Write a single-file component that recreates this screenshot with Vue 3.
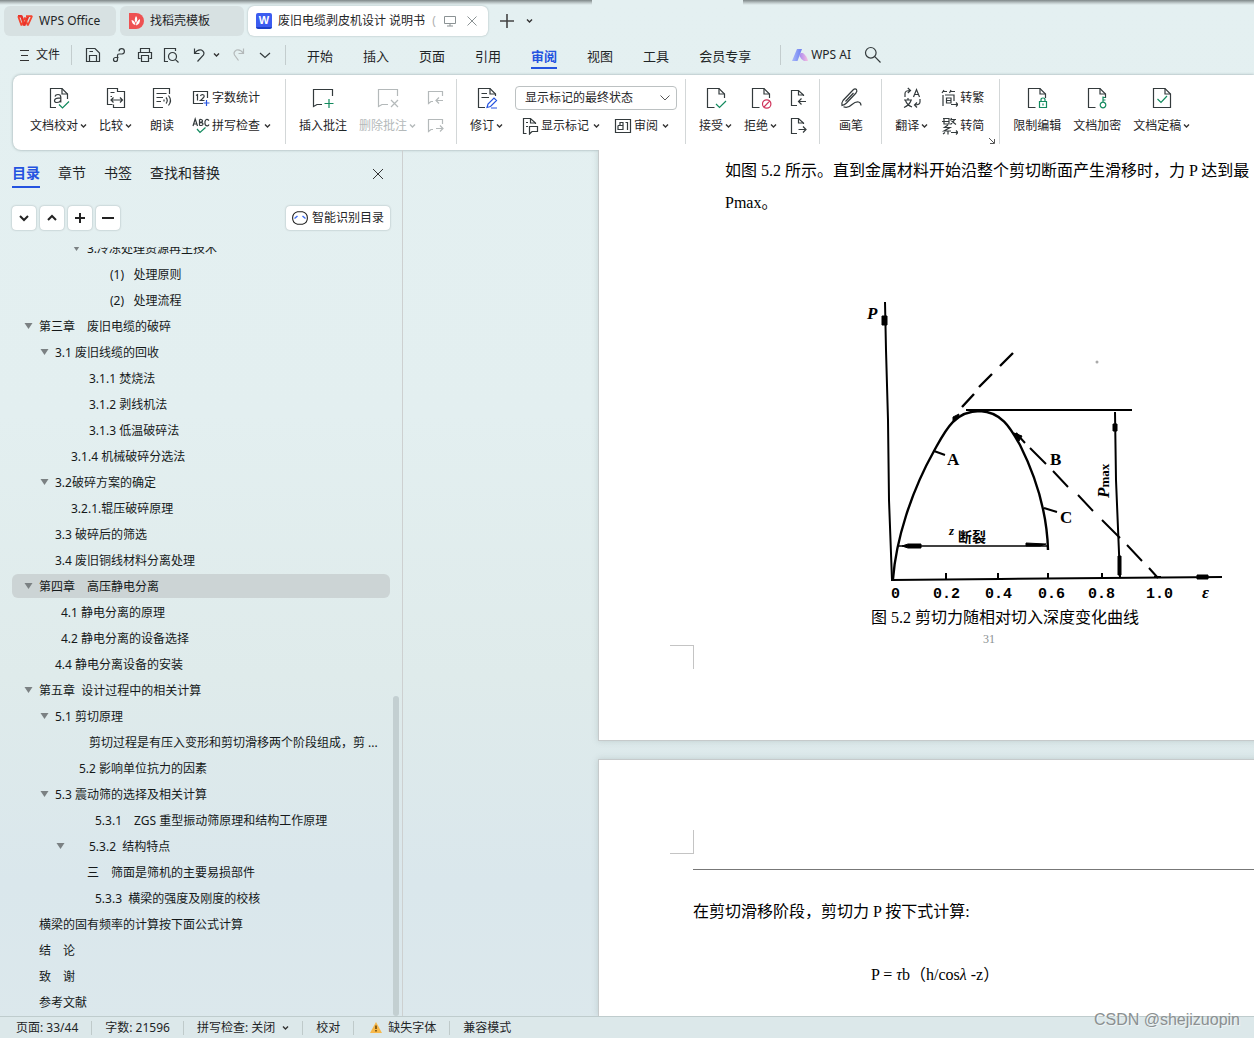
<script setup>
import { h, ref } from 'vue'

const K = '#333a3c'
const G = '#128a5e'
const B = '#2453e0'
const R = '#d0325a'
const M = '#b4b9ba'
const PAGE = 'M10.5 21.5H3.5V2.5H15L20.5 8V12'
const FOLD = 'M15 2.5V8H20.5'

/* each glyph is a list of [path, stroke] on a square grid */
const glyphs = {
  proof: [['M9 21.5H3.5V2.5H15L20.5 8V13', K], [FOLD, K], ['M8 10.5Q8.5 8.5 11 8.5Q13.8 8.5 13.8 11.3V16.5M13.8 11.8Q7.5 11.8 7.5 14.4Q7.5 16.5 10 16.5Q12.8 16.5 13.8 14.2', K], ['M12 18.5L15.5 22L22 15.5', G]],
  compare: [['M8.5 18.5H3.5V2.5H13.500V6M9.500 18.500V21.500H20.500V5.500H14', K], ['M6.5 6.5H10.500M6.5 10.5H8', K], ['M7 14H18.500M9.500 11.500L7 14L9.500 16.500M16 11.500L18.500 14L16 16.500', K]],
  read: [['M13 21.5H3.5V2.5H19.5V8', K], ['M6.5 7.5H16.5M6.5 11.5H13M6.5 15.5H11', K], ['M14 13.5V15.5M16 11.5Q18.5 14.5 16 17.5M18.5 9.5Q22.5 14.5 18.5 19.5', K]],
  addNote: [['M21.5 10V3.5H2.5V20.5L6 18.5H11', K], ['M18 13V22M13.5 17.5H22.5', G]],
  delNote: [['M21.5 10V3.5H2.5V20.5L6 18.5H12', M], ['M15 14L22 21M22 14L15 21', M]],
  revise: [['M10 21.5H3.5V2.5H15L20.5 8V10', K], [FOLD, K], ['M6.5 7.5H12M6.5 11.5H14', K], ['M12 21.5L13 18L19 12L21.5 14.5L15.5 20.5ZM16 22H22', B]],
  accept: [[PAGE, K], [FOLD, K], ['M12 18L15.5 21.5L22 15', G]],
  reject: [[PAGE, K], [FOLD, K], ['M13.5 18A4.2 4.2 0 1 0 21.9 18A4.2 4.2 0 1 0 13.5 18M15 21L20.6 15.2', R]],
  pen: [['M3 19.500Q2.500 16.500 4 14.500L14 4Q16 2 17.500 3.500Q18.500 5 17 7L7.500 17Q5.500 19 3 19.500ZM6.500 15.500L14.500 7', K], ['M4.500 20.800Q9 22.500 13 18.500Q16.500 15.500 19.500 16Q22 16.500 22 19.500', K]],
  translate: [['M5 11V7.5Q5 4.5 10.5 4.5M7.8 2L10.5 4.5L7.8 7', K], ['M13.500 11L16.5 3.500L19.500 11M14.5 8.5H18.5', K], ['M4 14H12M8 12V14M5.5 14.5Q7 19 12 21M11 14.5Q9.5 19 4 21.5', K], ['M20 13V16Q20 19 14.5 19M17 16.5L14.5 19L17 21.5', K]],
  lock: [[PAGE, K], [FOLD, K], ['M14.5 15.5H21.5V21.5H14.5ZM16 15.5V13.8Q16 12 18 12Q20 12 20 13.8V15.5M18 17.5V19.5', G]],
  key: [[PAGE, K], [FOLD, K], ['M15.2 19A2.8 2.8 0 1 0 20.8 19A2.8 2.8 0 1 0 15.2 19M18 16V10.5M18 11.5H20.5M18 14H20.5', G]],
  final: [['M3.5 21.5V2.5H15L20.5 8V21.5Z', K], [FOLD, K], ['M7.5 13L11 16.5L17 10', G]],
  count: [['M11 14.500H1.5V2.5H15.5V9', K], ['M4 6.500L5.5 5.500V11.5M8.5 7Q9 5.500 10.5 5.500Q12.3 5.700 12.2 7.200Q12 8.700 8.5 11.5H12.5', K], ['M14.500 11V17M11.500 14H17.500', B]],
  spell: [['M1 9L3.2 2L5.5 9M1.8 7H4.7M7.5 2.5V8.5M7.5 2.5Q10.5 2.2 10.5 4Q10.5 5.3 7.5 5.3Q11 5.3 11 7Q11 8.7 7.5 8.5M17 3.5Q14 1 13 4.5Q12.5 9 15.5 8.8Q16.5 8.7 17 7.5', K], ['M5 12L8 15.5L13.5 10.5', G]],
  prevNote: [['M16.5 7V2.5H2.5V14.5L5 12.5H7', M], ['M17 11.5H10M13 8.5L10 11.5L13 14.5', M]],
  nextNote: [['M16.5 7V2.5H2.5V14.5L5 12.5H7', M], ['M10 11.5H17M14 8.5L17 11.5L14 14.5', M]],
  prevDoc: [['M8 16.5H2.5V1.5H9.5L14.5 6V7M9.5 1.5V6H14.5', K], ['M17 12.5H9.5M12.5 9.5L9.5 12.5L12.5 15.5', K]],
  nextDoc: [['M8 16.5H2.5V1.5H9.5L14.5 6V7M9.5 1.5V6H14.5', K], ['M9.5 12.5H17M14 9.5L17 12.5L14 15.5', K]],
  marks: [['M5.5 16.5H2.5V1.5H9.5L14.5 6V7M9.5 1.5V6H14.5M5 5.5H7M5 9.5H7', K], ['M8.5 9.5H16.5V14.5H11L8.5 17Z', K]],
  pane: [['M1.5 2.5H16.5V15.5H1.5Z', K], ['M4 8.500V12.500H9V5.500H6V8.500H9M4 8.500H6M11.500 5.500H13.500V13', K]],
  toTrad: [['M4 1L2 4M3 2.5H7M11 1L9.5 4M10 2.5H15M3 6V17M5 6H14V12M6.5 9H11V14H6.5ZM6.5 11.5H11', K], ['M11 15.5H18M16 13.5L18 15.5L16 17.5', K]],
  toSimp: [['M3 1.5H9M2 4.5H9.5M4 2V7H9V1M11.5 1L10.5 3.5M11 2.5H16M14.5 3L10.5 7.5M11.5 4L16 7.5M8 8L4.5 10.5H10L4 14H11M8 14V17.5M5 15.5L3 17', K], ['M11 15.5H18M16 13.5L18 15.5L16 17.5', K]],
  save: [['M2.5 15.5V2.5H11L15.5 7V15.5ZM5.5 15.5V9.5H12.5V15.5M5.5 5.5H9', K]],
  link: [['M8.500 11.500H5.500A2 2 0 1 0 7.500 13.500V9.500Q7.500 8 9 8H12A2.700 2.700 0 1 0 9 5.200', K]],
  print: [['M4.5 6V2.5H13.5V6M4.5 12.5H2.5V6.5H15.5V12.5H13.5M5.5 9.5H12.5V15.5H5.5Z', K]],
  preview: [['M6 15.5H2.5V2.5H13.5V5', K], ['M6.5 10.5A4 4 0 1 0 14.5 10.5A4 4 0 1 0 6.5 10.5M13.3 13.3L16.5 16.5', K]],
  undo: [['M4.500 2.500V7.500H9.500M4.500 7.500Q7.500 3 11.500 4Q15 6 13.500 9L7.500 15.500', K]],
  redo: [['M13.500 2.500V7.500H8.500M13.500 7.500Q10.500 3 6.500 4Q3 6 4.500 9L8.500 14.500', M]],
  chev: [['M4 7L9 11.5L14 7', K]],
  search: [['M1.5 6.8A5.3 5.3 0 1 0 12.1 6.8A5.3 5.3 0 1 0 1.5 6.8M10.8 10.6L16.5 16.5', K]],
}
const sizes = { small: 18, big: 24 }
const Glyph = (p) => h('svg', {
  width: sizes[p.size], height: sizes[p.size], viewBox: `0 0 ${sizes[p.size]} ${sizes[p.size]}`,
  fill: 'none', 'stroke-width': 1.2, 'aria-hidden': 'true',
}, glyphs[p.name].map(([d, stroke]) => h('path', { d, stroke })))
Glyph.props = ['name', 'size']

const Caret = (p) => h('svg', { width: 7, height: 6, viewBox: '0 0 7 6', fill: 'none' },
  [h('path', { d: 'M1 1.5L3.5 4L6 1.5', stroke: p.color || '#333', 'stroke-width': 1.4 })])
Caret.props = ['color']

const menus = ['开始', '插入', '页面', '引用', '审阅', '视图', '工具', '会员专享']
const side = ['目录', '章节', '书签', '查找和替换']
const view = ref('显示标记的最终状态')

/* x: text start, a: x of the folding arrow */
const toc = [
  { t: '3.冷冻处理资源再生技术', x: 87, a: 72 },
  { t: '(1)   处理原则', x: 110 },
  { t: '(2)   处理流程', x: 110 },
  { t: '第三章　废旧电缆的破碎', x: 39, a: 24 },
  { t: '3.1 废旧线缆的回收', x: 55, a: 40 },
  { t: '3.1.1 焚烧法', x: 89 },
  { t: '3.1.2 剥线机法', x: 89 },
  { t: '3.1.3 低温破碎法', x: 89 },
  { t: '3.1.4 机械破碎分选法', x: 71 },
  { t: '3.2破碎方案的确定', x: 55, a: 40 },
  { t: '3.2.1.辊压破碎原理', x: 71 },
  { t: '3.3 破碎后的筛选', x: 55 },
  { t: '3.4 废旧铜线材料分离处理', x: 55 },
  { t: '第四章　高压静电分离', x: 39, a: 24, on: true },
  { t: '4.1 静电分离的原理', x: 61 },
  { t: '4.2 静电分离的设备选择', x: 61 },
  { t: '4.4 静电分离设备的安装', x: 55 },
  { t: '第五章  设计过程中的相关计算', x: 39, a: 24 },
  { t: '5.1 剪切原理', x: 55, a: 40 },
  { t: '剪切过程是有压入变形和剪切滑移两个阶段组成，剪 ...', x: 89 },
  { t: '5.2 影响单位抗力的因素', x: 79 },
  { t: '5.3 震动筛的选择及相关计算', x: 55, a: 40 },
  { t: '5.3.1　ZGS 重型振动筛原理和结构工作原理', x: 95 },
  { t: '5.3.2  结构特点', x: 89, a: 56 },
  { t: '三　筛面是筛机的主要易损部件', x: 87 },
  { t: '5.3.3  横梁的强度及刚度的校核', x: 95 },
  { t: '横梁的固有频率的计算按下面公式计算', x: 39 },
  { t: '结　论', x: 39 },
  { t: '致　谢', x: 39 },
  { t: '参考文献', x: 39 },
]
</script>

<template>
  <div class="app">
    <header class="tabs">
      <button class="tab home">
        <svg width="16" height="12" viewBox="0 0 16 12" fill="none" stroke-width="2.4" stroke-linejoin="bevel">
          <path d="M1 1.2H4.5L7.2 10.5L11 1.5" stroke="#e8322c" /><path d="M1.2 1.2L4.5 10.5L7.8 2.5L10.8 10.5L15 1.2H9" stroke="#f4442f" stroke-width="1.8" />
        </svg>
        <span>WPS Office</span>
      </button>
      <button class="tab store">
        <svg width="16" height="16" viewBox="0 0 16 16">
          <path d="M1 0H8A8 8 0 0 1 8 16H1Z" fill="#ee5152" />
          <path d="M8 3Q10.5 6 8 10Q5.500 7 8 3M3.500 7Q7 7.500 7.500 12Q4 11.500 3.500 7M12 6Q12.500 11 8 12.500Q8 8.500 12 6" fill="#fff" />
        </svg>
        <span>找稻壳模板</span>
      </button>
      <button class="tab doc">
        <span class="wicon">W</span>
        <span>废旧电缆剥皮机设计 说明书</span>
        <span class="fade">(</span>
        <svg class="mon" width="14" height="12" viewBox="0 0 14 12" fill="none" stroke="#8b9294"><path d="M1.500 1.500H12.500V8.500H1.500ZM7 8.500V11M4 11H10" /></svg>
        <svg width="10" height="10" viewBox="0 0 10 10" fill="none" stroke="#8b9294"><path d="M.5.5L9.500 9.500M9.500.5L.5 9.500" /></svg>
      </button>
      <button class="plain plus" aria-label="新建">
        <svg width="14" height="14" viewBox="0 0 14 14" fill="none" stroke="#444" stroke-width="1.6"><path d="M7 0V14M0 7H14" /></svg>
      </button>
      <button class="plain" aria-label="更多"><Caret /></button>
    </header>

    <nav class="menu">
      <button class="plain file">
        <svg width="9" height="12" viewBox="0 0 9 12" fill="none" stroke="#333"><path d="M0 1.500H9M1 6.500H8M0 11.500H9" /></svg>文件
      </button>
      <i class="bar"></i>
      <div class="quick">
        <button class="plain" aria-label="保存"><Glyph name="save" size="small" /></button>
        <button class="plain" aria-label="链接"><Glyph name="link" size="small" /></button>
        <button class="plain" aria-label="打印"><Glyph name="print" size="small" /></button>
        <button class="plain" aria-label="预览"><Glyph name="preview" size="small" /></button>
        <button class="plain und" aria-label="撤销"><Glyph name="undo" size="small" /><Caret /></button>
        <button class="plain" aria-label="恢复"><Glyph name="redo" size="small" /></button>
        <button class="plain" aria-label="展开"><Glyph name="chev" size="small" /></button>
      </div>
      <i class="bar"></i>
      <div class="items">
        <button v-for="m in menus" :key="m" class="plain item" :class="{ on: m === '审阅' }">{{ m }}</button>
      </div>
      <i class="bar"></i>
      <button class="plain ai">
        <svg width="16" height="12" viewBox="0 0 16 12">
          <defs>
            <linearGradient id="ga"><stop offset="0" stop-color="#a9b9fa" /><stop offset="1" stop-color="#6a7df0" /></linearGradient>
            <linearGradient id="gb"><stop offset="0" stop-color="#a98bf0" /><stop offset="1" stop-color="#f7bfe0" /></linearGradient>
          </defs>
          <path d="M5 0H10L5.500 12H0Z" fill="url(#ga)" /><path d="M8.500 4L11 4Q15 7 16 12H12Q9 10.500 7.500 7Z" fill="url(#gb)" />
        </svg>
        WPS AI
      </button>
      <button class="plain" aria-label="搜索"><Glyph name="search" size="small" /></button>
    </nav>

    <section class="ribbon">
      <div class="group first">
        <button class="big"><Glyph name="proof" size="big" /><span>文档校对<Caret /></span></button>
        <button class="big"><Glyph name="compare" size="big" /><span>比较<Caret /></span></button>
        <button class="big solo"><Glyph name="read" size="big" /><span>朗读</span></button>
        <div class="stack">
          <button class="small"><Glyph name="count" size="small" />字数统计</button>
          <button class="small"><Glyph name="spell" size="small" />拼写检查<Caret class="gapc" /></button>
        </div>
      </div>
      <div class="group">
        <button class="big"><Glyph name="addNote" size="big" /><span>插入批注</span></button>
        <button class="big off"><Glyph name="delNote" size="big" /><span>删除批注<Caret color="#b4b9ba" /></span></button>
        <div class="stack notes">
          <button class="small" aria-label="上一条批注"><Glyph name="prevNote" size="small" /></button>
          <button class="small" aria-label="下一条批注"><Glyph name="nextNote" size="small" /></button>
        </div>
      </div>
      <div class="group track">
        <button class="big"><Glyph name="revise" size="big" /><span>修订<Caret /></span></button>
        <div class="stack">
          <label class="pick">
            <select v-model="view" aria-label="标记显示方式"><option>显示标记的最终状态</option></select>
            <svg width="10" height="6" viewBox="0 0 10 6" fill="none" stroke="#555"><path d="M.5.500L5 5L9.500.500" /></svg>
          </label>
          <div class="pair">
            <button class="small"><Glyph name="marks" size="small" />显示标记<Caret class="gapc" /></button>
            <button class="small"><Glyph name="pane" size="small" />审阅<Caret class="gapc" /></button>
          </div>
        </div>
      </div>
      <div class="group">
        <button class="big"><Glyph name="accept" size="big" /><span>接受<Caret /></span></button>
        <button class="big"><Glyph name="reject" size="big" /><span>拒绝<Caret /></span></button>
        <div class="stack">
          <button class="small" aria-label="上一条修订"><Glyph name="prevDoc" size="small" /></button>
          <button class="small" aria-label="下一条修订"><Glyph name="nextDoc" size="small" /></button>
        </div>
      </div>
      <div class="group">
        <button class="big solo"><Glyph name="pen" size="big" /><span>画笔</span></button>
      </div>
      <div class="group">
        <button class="big"><Glyph name="translate" size="big" /><span>翻译<Caret /></span></button>
        <div class="stack">
          <button class="small"><Glyph name="toTrad" size="small" />转繁</button>
          <button class="small"><Glyph name="toSimp" size="small" />转简</button>
        </div>
        <svg class="launch" width="6" height="6" viewBox="0 0 6 6" fill="none" stroke="#555"><path d="M0 0L5 5M5.500 1V5.500H1" /></svg>
      </div>
      <div class="group last">
        <button class="big"><Glyph name="lock" size="big" /><span>限制编辑</span></button>
        <button class="big"><Glyph name="key" size="big" /><span>文档加密</span></button>
        <button class="big"><Glyph name="final" size="big" /><span>文档定稿<Caret /></span></button>
      </div>
    </section>

    <main class="main">
      <aside class="side">
        <div class="stabs">
          <button v-for="s in side" :key="s" class="plain stab" :class="{ on: s === '目录' }">{{ s }}</button>
          <button class="plain close" aria-label="关闭">
            <svg width="10" height="10" viewBox="0 0 10 10" fill="none" stroke="#333"><path d="M0 0L10 10M10 0L0 10" /></svg>
          </button>
        </div>
        <div class="tools">
          <button class="sq" aria-label="展开"><svg width="12" height="12" viewBox="0 0 12 12"><path d="M2 4L6 8L10 4" /></svg></button>
          <button class="sq" aria-label="收起"><svg width="12" height="12" viewBox="0 0 12 12"><path d="M2 8L6 4L10 8" /></svg></button>
          <button class="sq" aria-label="增加"><svg width="12" height="12" viewBox="0 0 12 12"><path d="M6 1V11M1 6H11" /></svg></button>
          <button class="sq" aria-label="减少"><svg width="12" height="12" viewBox="0 0 12 12"><path d="M0 6H12" /></svg></button>
          <button class="sq smart">
            <svg width="16" height="14" viewBox="0 0 16 14"><path d="M5.500 .7H10.500Q15.400 2 15.400 7Q15.400 12 10.500 13.300H5.500Q.6 12 .6 7Q.6 2 5.500 .7Z" stroke-width="1.100" /><path d="M2.500 7.500L5.500 5M13.500 7.500L10.500 5" stroke="#3b6af0" stroke-width="1.400" /></svg>
            智能识别目录
          </button>
        </div>
        <div class="tree">
          <ul>
            <li v-for="r in toc" :key="r.t" :class="{ on: r.on }" :style="{ paddingLeft: (r.a || r.x) - 12 + 'px' }">
              <svg v-if="r.a" width="9" height="6" viewBox="0 0 9 6" :style="{ marginRight: r.x - r.a - 9 + 'px' }"><path d="M0.500 0H8.500L4.500 6Z" fill="#7b8183" /></svg>
              <span>{{ r.t }}</span>
            </li>
          </ul>
          <div class="scroll"></div>
        </div>
      </aside>

      <article class="desk">
        <section class="page one">
          <p class="body in">如图 5.2 所示。直到金属材料开始沿整个剪切断面产生滑移时，力 P 达到最<br>Pmax。</p>
          <svg class="chart" width="370" height="312" viewBox="860 296 370 312" fill="none" stroke="#000" stroke-width="2">
            <path d="M885 302L886 350L888 420L889 500L892 580L1000 579L1222 577" />
            <path d="M882 316H887V325H882Z M1197 575H1208V579H1197Z" fill="#000" stroke-width="1" />
            <path d="M893 579C896 540 911 492 934 451C945 431 954 411 980 411C1001 412 1010 427 1020 445C1035 475 1047 512 1048 550" stroke-width="2.400" />
            <path d="M962 407L974 394M979 387L992 374M1000 366L1013 353" stroke-width="2.400" />
            <path d="M953 417L959 414L957 419L953 421Z M1014 433L1022 436L1019 441Z" fill="#000" stroke-width="1" />
            <path d="M966 410H1132" />
            <path d="M1016 433L1025 443M1030 448L1046 464M1053 471L1068 487M1078 495L1093 511M1102 520L1120 538M1127 545L1142 561M1149 568L1158 578" />
            <path d="M1115 412L1116 480L1120 577" />
            <path d="M1113 424H1117V431H1113ZM1118 556H1121V575H1118Z" fill="#000" stroke-width="1" />
            <path d="M898 546H1048" stroke-width="1.600" />
            <path d="M902 546L908 544H921V548H908ZM1046 544L1040 546H1026V543Z" fill="#000" stroke-width="1" />
            <path d="M934 451L945 455M1044 508L1057 512M946 573V579M998 573V579M1048 573V579M1102 573V579M1154 577H1161" />
            <circle cx="1097" cy="362" r="1.500" fill="#aaa" stroke="none" />
            <g class="lab">
              <text x="867" y="319" class="ital">P</text>
              <text x="947" y="465">A</text><text x="1050" y="465">B</text><text x="1060" y="523">C</text>
              <text x="949" y="535" class="ital tiny">z</text><text x="958" y="542" class="cn">断裂</text>
              <text transform="translate(1109 498) rotate(-90)"><tspan class="ital">P</tspan><tspan class="tiny">max</tspan></text>
              <g class="num">
                <text x="891" y="598">0</text><text x="933" y="598">0.2</text><text x="985" y="598">0.4</text><text x="1038" y="598">0.6</text><text x="1088" y="598">0.8</text><text x="1146" y="598">1.0</text>
              </g>
              <text x="1202" y="598" class="ital">ε</text>
            </g>
          </svg>
          <p class="cap">图 5.2 剪切力随相对切入深度变化曲线</p>
          <p class="no">31</p>
          <i class="crop top"></i>
        </section>
        <section class="page two">
          <i class="crop bottom"></i>
          <hr>
          <p class="body">在剪切滑移阶段，剪切力 P 按下式计算:</p>
          <p class="body formula">P = <em>τ</em>b（h/cos<em>λ</em> -z）</p>
        </section>
      </article>
    </main>

    <footer class="status">
      <span>页面: 33/44</span>
      <span>字数: 21596</span>
      <span>拼写检查: 关闭<Caret class="gaps" /></span>
      <span>校对</span>
      <span class="warn"><svg width="12" height="11" viewBox="0 0 12 11"><path d="M6 0L12 11H0Z" fill="#f7b84a" /><path d="M6 3.500V7M6 8V9.500" stroke="#5a3a00" stroke-width="1.400" /></svg>缺失字体</span>
      <span>兼容模式</span>
      <b class="mark">CSDN @shejizuopin</b>
    </footer>
  </div>
</template>

<style>
body { margin: 0; }
</style>

<style scoped>
.app {
  height: 100vh;
  display: flex;
  flex-direction: column;
  overflow: hidden;
  color: #1f2527;
  font: 12px/18px "Noto Sans", "Noto Sans CJK SC", sans-serif;
  background: linear-gradient(180deg, #e4f0f1 0%, #e3eff0 40%, #dfebeb 65%, #dae7ec 85%, #dce8ec 100%);
}
button {
  font: inherit;
  color: inherit;
  border: 0;
  padding: 0;
  background: none;
  white-space: nowrap;
  display: flex;
  align-items: center;
}
svg { flex: none; display: block; }
p, ul { margin: 0; padding: 0; }

.tabs {
  display: flex;
  align-items: center;
  height: 30px;
  padding: 6px 4px 5px;
  gap: 4px;
  background:
    linear-gradient(#7e8788, #c2cccd 3px, transparent 5px) 0 0 / 592px 5px no-repeat,
    linear-gradient(#7e8788, #c2cccd 3px, transparent 5px) 743px 0 / 100% 5px no-repeat;
}
.tab { height: 30px; border-radius: 6px; background: #d7e1e2; box-sizing: border-box; }
.home { width: 112px; padding-left: 13px; gap: 6px; }
.store { width: 124px; padding-left: 8px; gap: 6px; }
.doc { width: 240px; padding-left: 8px; gap: 6px; background: #fff; box-shadow: 0 0 2px #9fb0b2; }
.wicon { width: 16px; height: 16px; background: #3c5cf0; border-radius: 2px; border-bottom: 2px solid #1c3fc8; box-sizing: border-box; color: #fff; font: bold 11px/14px "Liberation Sans", sans-serif; text-align: center; }
.fade { width: 6px; color: #b0b0b0; }
.mon { margin-right: 4px; }
.plus { margin: 0 8px; }

.menu { display: flex; align-items: center; height: 28px; padding: 0 20px 6px; }
.file { gap: 7px; }
.bar { width: 1px; height: 20px; background: #c3cdce; margin: 0 11px; }
.quick { display: flex; gap: 8px; margin-left: 1px; }
.und { gap: 5px; margin: 0 2px; }
.items { display: flex; gap: 30px; margin: 0 18px 0 10px; font-size: 13px; }
.item { height: 28px; padding-top: 3px; border-bottom: 2px solid transparent; box-sizing: border-box; }
.item.on { color: #2453e0; font-weight: bold; border-color: #2453e0; }
.ai { gap: 3px; margin-right: 13px; }

.ribbon {
  display: flex;
  height: 75px;
  margin-left: 13px;
  background: #fff;
  border-radius: 8px 0 0 8px;
  box-shadow: 0 0 3px #93a5a6;
}
.group {
  display: flex;
  align-items: flex-start;
  gap: 12px;
  margin: 4px 0 6px;
  padding: 7px 12px 0 13px;
  border-right: 1px solid #d3d7d8;
}
.first { padding-left: 17px; padding-right: 14px; }
.track { padding-right: 8px; }
.last { border: 0; }
.big { flex-direction: column; gap: 6px; }
.solo { min-width: 36px; }
.big span { display: flex; align-items: center; gap: 2px; line-height: 20px; }
.off { color: #b4b9ba; }
.stack { display: flex; flex-direction: column; gap: 4px; }
.notes { margin-left: -2px; }
.small { height: 24px; gap: 2px; }
.gapc { margin-left: 2px; }
.pair { display: flex; gap: 14px; padding-left: 6px; }
.pick { position: relative; width: 162px; height: 24px; }
.pick svg { position: absolute; right: 7px; top: 9px; pointer-events: none; }
select { appearance: none; width: 100%; height: 24px; padding: 0 9px; border: 1px solid #bcc1c2; border-radius: 4px; background: #fff; font: inherit; color: inherit; }
.launch { align-self: flex-end; margin: 0 -8px 0 -7px; }

.main { flex: 1; min-height: 0; display: flex; }
.side { flex: none; width: 402px; border-right: 1px solid #cdd0d0; display: flex; flex-direction: column; }
.stabs { display: flex; gap: 18px; padding: 12px 19px 0 12px; font-size: 14px; }
.stab { height: 26px; padding-bottom: 2px; border-bottom: 2px solid transparent; box-sizing: border-box; }
.stab.on { color: #2453e0; font-weight: bold; border-color: #2453e0; }
.close { margin-left: auto; padding-bottom: 2px; }
.tools { display: flex; gap: 4px; padding: 18px 12px 17px; }
.sq { justify-content: center; width: 24px; height: 24px; background: #fff; border-radius: 4px; box-shadow: 0 0 2px #9aa8aa; }
.sq svg { fill: none; stroke: #222; stroke-width: 2; }
.smart { width: 104px; margin-left: auto; gap: 4px; }
.tree { flex: 1; min-height: 0; display: flex; overflow: hidden; }
ul { width: 378px; margin: -11px 3px 0 12px; list-style: none; color: #15191a; }
li { display: flex; align-items: center; height: 24px; margin-bottom: 2px; border-radius: 6px; white-space: pre; box-sizing: border-box; }
li span { line-height: 20px; padding-top: 2px; }
li.on { background: #ccd4d5; }
.scroll { width: 6px; height: 320px; align-self: flex-end; border-radius: 3px; background: #c3cfd1; }

.desk { flex: 1; min-width: 0; overflow: hidden; display: flex; flex-direction: column; padding-left: 195px; }
.page { flex: none; width: 780px; box-sizing: border-box; background: #fff; border: 1px solid #c6cacb; box-shadow: 0 0 6px rgba(120, 140, 140, 0.3); padding: 0 92px 0 94px; color: #000; font-family: "Liberation Serif", "Noto Sans CJK SC", serif; }
.one { border-top: 0; padding-top: 5px; padding-bottom: 71px; margin-bottom: 18px; }
.two { flex: 1 0 auto; border-bottom: 0; padding-top: 70px; }
.body { font-size: 16px; line-height: 32px; white-space: nowrap; }
.in { margin-left: 32px; }
.chart { margin: 77px 0 0 167px; }
.cap { font-size: 16px; line-height: 20px; text-align: center; margin-left: 32px; }
.no { font-size: 12px; line-height: 12px; text-align: center; color: #8a8f90; margin-top: 5px; }
.crop { display: block; width: 24px; height: 24px; margin-left: -23px; border-right: 1px solid #c4c4c4; box-sizing: border-box; }
.top { border-top: 1px solid #c4c4c4; }
.bottom { border-bottom: 1px solid #c4c4c4; }
hr { margin: 15px -92px 26px 0; border: 0; height: 1px; background: #777; }
.formula { margin: 31px 0 0 178px; }
.lab { fill: #000; stroke: none; font: bold 17px "Liberation Serif", serif; }
.num { font: bold 15px "Liberation Mono", monospace; }
.ital { font-style: italic; }
.tiny { font-size: 13px; }
.cn { font: bold 14px "Noto Sans CJK SC", sans-serif; }

.status { position: relative; flex: none; display: flex; align-items: center; height: 21px; padding-left: 3px; border-top: 1px solid #bfcccd; background: #dce8ea; white-space: nowrap; }
.status span { display: flex; align-items: center; height: 14px; padding: 0 13px; border-right: 1px solid #bfcaca; }
.status span:nth-of-type(6) { border: 0; }
.gaps { margin-left: 7px; }
.status .warn { gap: 6px; padding-left: 16px; }
.mark { position: absolute; right: 14px; bottom: 9px; font: 16px/18px "Liberation Sans", sans-serif; color: #8b9091; text-shadow: 1px 1px 0 #f0f4f4; }
</style>
